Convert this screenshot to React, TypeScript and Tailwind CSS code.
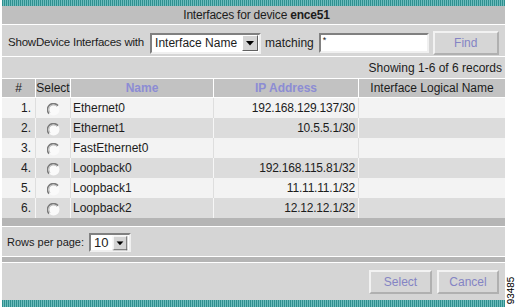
import React from 'react'

const rows = [
  { n: 1, name: 'Ethernet0', ip: '192.168.129.137/30' },
  { n: 2, name: 'Ethernet1', ip: '10.5.5.1/30' },
  { n: 3, name: 'FastEthernet0', ip: '' },
  { n: 4, name: 'Loopback0', ip: '192.168.115.81/32' },
  { n: 5, name: 'Loopback1', ip: '11.11.11.1/32' },
  { n: 6, name: 'Loopback2', ip: '12.12.12.1/32' },
]

const cols = 'grid grid-cols-[34px_35px_143px_145px_1fr]'

function Radio() {
  return (
    <svg width="13" height="13" viewBox="0 0 13 13">
      <circle cx="6.5" cy="6.5" r="6" fill="#fafafa" />
      <path d="M11 2.6 A6 6 0 0 0 2 10.6" fill="none" stroke="#7a7a7a" strokeWidth="1.6" />
      <path d="M10 3.6 A4.6 4.6 0 0 0 3 9.6" fill="none" stroke="#bcbcbc" strokeWidth="1" />
    </svg>
  )
}

function Arrow() {
  return (
    <div className="w-[16px] h-[16px] shrink-0 bg-[#d4d4d4] border border-t-white border-l-white border-r-[#606060] border-b-[#606060] flex items-center justify-center">
      <svg width="8" height="5" viewBox="0 0 8 5">
        <path d="M0 0 H8 L4 4.5 Z" fill="#000" />
      </svg>
    </div>
  )
}

function Btn({ label, w }: { label: string; w: string }) {
  return (
    <div
      className={`${w} h-[24px] bg-[#d6d6d6] border-2 border-t-[#f2f2f2] border-l-[#f2f2f2] border-r-[#b0b0b0] border-b-[#b0b0b0] flex items-center justify-center text-[#8484c4]`}
    >
      {label}
    </div>
  )
}

export default function App() {
  return (
    <div className="w-[519px] h-[307px] bg-white flex font-['Liberation_Sans',Arial,sans-serif] text-[12px] text-[#1c1c1c] leading-none overflow-hidden">
      <div className="ml-[2px] w-[503px] flex flex-col">
        {/* top stripe */}
        <div className="h-[6px] bg-[repeating-linear-gradient(90deg,#2f8f8f_0_1px,#6dbcbc_1px_2px)]" />

        {/* title */}
        <div className="h-[19px] bg-[#bfbfbf] border-b border-white flex items-center justify-center pl-[6px]">
          <span className="tracking-[-0.2px]">
            Interfaces for device <b>ence51</b>
          </span>
        </div>

        {/* filter */}
        <div className="h-[32px] bg-[#d5d5d5] border-b border-white flex items-center pt-[5px] pl-[6px]">
          <span className="text-[11.5px] tracking-[-0.2px] whitespace-nowrap">ShowDevice Interfaces with</span>
          <div className="ml-[6px] w-[111px] h-[21px] bg-white border-2 border-t-[#808080] border-l-[#808080] border-r-[#f0f0f0] border-b-[#f0f0f0] flex items-center justify-between pl-[3px] pr-px">
            <span className="text-[12px] whitespace-nowrap">Interface Name</span>
            <Arrow />
          </div>
          <span className="ml-[4px]">matching</span>
          <div className="ml-[5px] w-[110px] h-[20px] bg-white border-2 border-t-[#808080] border-l-[#808080] border-r-[#f0f0f0] border-b-[#f0f0f0] pl-[2px] pt-px text-[9px]">
            *
          </div>
          <div className="ml-[4px]">
            <Btn label="Find" w="w-[66px]" />
          </div>
        </div>

        {/* count */}
        <div className="h-[22px] bg-[#d5d5d5] border-b border-white flex items-center justify-end pr-[3px]">
          Showing 1-6 of 6 records
        </div>

        {/* header */}
        <div className={`${cols} h-[19px] bg-[#c2c2c2] border-b border-white`}>
          <div className="border-r border-white flex items-center justify-center">#</div>
          <div className="border-r border-white flex items-center justify-center">Select</div>
          <div className="border-r border-white flex items-center justify-center font-bold text-[#8c8cd4]">Name</div>
          <div className="border-r border-white flex items-center justify-center font-bold text-[#8c8cd4]">IP Address</div>
          <div className="flex items-center justify-center">Interface Logical Name</div>
        </div>

        {/* rows */}
        {rows.map((r, i) => {
          const bg = i % 2 === 0 ? 'bg-[#f3f3f3]' : 'bg-[#dcdcdc]'
          const line = i % 2 === 0 ? 'border-[#dedede]' : 'border-[#f6f6f6]'
          return (
            <div key={r.n} className={`${cols} h-[20px] ${bg}`}>
              <div className={`border-r ${line} flex items-center justify-end pr-[4px]`}>{r.n}.</div>
              <div className={`border-r ${line} flex items-center justify-center pt-[2px]`}>
                <Radio />
              </div>
              <div className={`border-r ${line} flex items-center pl-[2px]`}>{r.name}</div>
              <div className={`border-r ${line} flex items-center justify-end pr-[3px] tracking-[-0.2px]`}>{r.ip}</div>
              <div />
            </div>
          )
        })}

        <div className="h-[9px] bg-[#b5b5b5] border-b border-white" />

        {/* rows per page */}
        <div className="h-[30px] bg-[#d5d5d5] border-b border-white flex items-center pl-[5px] pt-[2px]">
          <span className="text-[11px]">Rows per page:</span>
          <div className="ml-[5px] w-[42px] h-[19px] bg-white border-2 border-t-[#808080] border-l-[#808080] border-r-[#f0f0f0] border-b-[#f0f0f0] flex items-center justify-between pl-[3px] pr-px">
            <span className="text-[13px]">10</span>
            <div className="scale-90">
              <Arrow />
            </div>
          </div>
        </div>

        <div className="h-[6px] bg-[#b5b5b5] border-b border-white" />

        {/* buttons */}
        <div className="flex-1 bg-[#d5d5d5] flex items-start justify-end gap-[5px] pt-[7px] pr-[6px]">
          <Btn label="Select" w="w-[63px]" />
          <Btn label="Cancel" w="w-[62px]" />
        </div>

        {/* bottom stripe */}
        <div className="h-[7px] bg-[repeating-linear-gradient(90deg,#2f8f8f_0_1px,#6dbcbc_1px_2px)]" />
      </div>

      <div className="flex-1 flex items-end justify-center pb-[2px]">
        <span className="[writing-mode:vertical-rl] rotate-180 font-['Liberation_Mono',monospace] text-[10px] tracking-[-0.5px] text-black">
          93485
        </span>
      </div>
    </div>
  )
}
